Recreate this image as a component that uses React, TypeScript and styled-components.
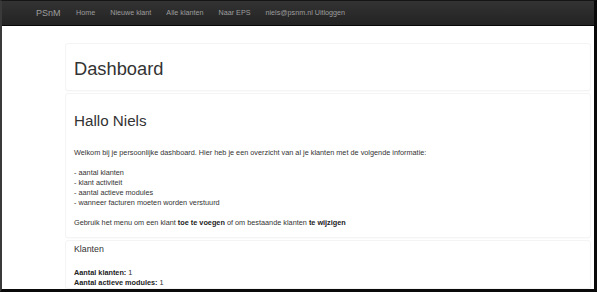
import styled, { createGlobalStyle } from "styled-components";

const GlobalStyle = createGlobalStyle`
  html, body {
    margin: 0;
    padding: 0;
    background: #ffffff;
  }
  body {
    font-family: "Liberation Sans", Arial, sans-serif;
    color: #333333;
  }
`;

const NAV_LINKS = ["Home", "Nieuwe klant", "Alle klanten", "Naar EPS", "niels@psnm.nl Uitloggen"];

const BULLETS = [
  "aantal klanten",
  "klant activiteit",
  "aantal actieve modules",
  "wanneer facturen moeten worden verstuurd",
];

const App: React.FC = () => {
  return (
    <>
      <GlobalStyle />
      <Frame>
        <Navbar>
          <Brand>PSnM</Brand>
          {NAV_LINKS.map((label) => (
            <NavLink key={label}>{label}</NavLink>
          ))}
        </Navbar>
        <Main>
          <Card>
            <PageTitle>Dashboard</PageTitle>
          </Card>
          <Card $bottom={9}>
            <Greeting>Hallo Niels</Greeting>
            <Text>
              Welkom bij je persoonlijke dashboard. Hier heb je een overzicht van al je klanten met de volgende
              informatie:
            </Text>
            <Spacer />
            {BULLETS.map((item) => (
              <Text key={item}>- {item}</Text>
            ))}
            <Spacer />
            <Text>
              Gebruik het menu om een klant <b>toe te voegen</b> of om bestaande klanten <b>te wijzigen</b>
            </Text>
          </Card>
          <Card $bottom={0}>
            <SectionTitle>Klanten</SectionTitle>
            <Stats>
              <Text>
                <b>Aantal klanten:</b> 1
              </Text>
              <Text>
                <b>Aantal actieve modules:</b> 1
              </Text>
            </Stats>
          </Card>
        </Main>
      </Frame>
    </>
  );
};
export default App;

const Frame = styled.div`
  width: 597px;
  height: 292px;
  box-sizing: border-box;
  border-top: 1px solid #161616;
  border-left: 2px solid #3a3a3a;
  border-right: 3px solid #0a0a0a;
  border-bottom: 3px solid #0a0a0a;
  overflow: hidden;
  display: flex;
  flex-direction: column;
`;

const Navbar = styled.nav`
  flex: none;
  height: 24px;
  display: flex;
  align-items: center;
  padding-left: 27px;
  background-image: linear-gradient(to bottom, #333333 0, #232323 100%);
  border-bottom: 1px solid #080808;
`;

const Brand = styled.a`
  padding: 0 8px 0 7px;
  font-size: 9px;
  color: #9d9d9d;
  line-height: 24px;
`;

const NavLink = styled.a`
  padding: 0 7.5px;
  font-size: 7.2px;
  line-height: 24px;
  color: #9d9d9d;
  white-space: nowrap;
`;

const Main = styled.main`
  flex: 1;
  display: flex;
  flex-direction: column;
  gap: 2px;
  padding: 17px 0 0 63px;
  margin-right: 3px;
`;

const Card = styled.section<{ $bottom?: number }>`
  flex: none;
  padding: 0 8px ${(p) => p.$bottom ?? 0}px;
  background: #ffffff;
  border: 1px solid #f4f4f4;
  border-radius: 3px;
  box-shadow: 0 1px 1px rgba(0, 0, 0, 0.02);
`;

const PageTitle = styled.h1`
  margin: 15px 0 11px;
  font-size: 18.3px;
  line-height: 20px;
  font-weight: 500;
  color: #333333;
`;

const Greeting = styled.h2`
  margin: 18px 0 19px;
  font-size: 15.2px;
  line-height: 17px;
  font-weight: 500;
  color: #333333;
`;

const SectionTitle = styled.h4`
  margin: 3px 0 0;
  font-size: 8.8px;
  line-height: 10px;
  font-weight: 500;
  color: #333333;
`;

const Stats = styled.div`
  margin-top: 14px;
`;

const Text = styled.div`
  font-size: 7.3px;
  line-height: 10px;
  color: #333333;

  b {
    color: #222222;
  }
`;

const Spacer = styled.div`
  height: 10px;
`;
